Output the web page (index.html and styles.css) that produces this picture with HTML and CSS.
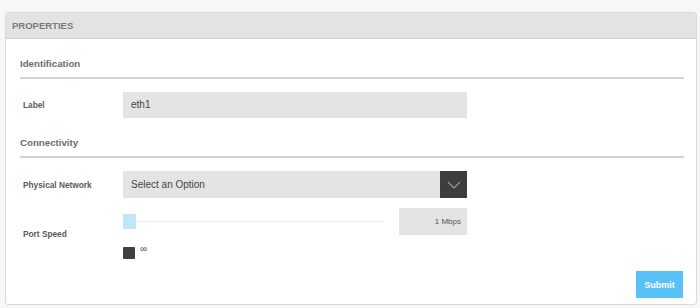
FILE: index.html
```html
<!DOCTYPE html>
<html lang="en">
<head>
  <meta charset="UTF-8">
  <title>Properties</title>
  <link rel="stylesheet" href="styles.css">
</head>
<body>

  <div class="panel">
    <div class="panel-header">PROPERTIES</div>
    <div class="panel-body">

      <h3 class="section-title">Identification</h3>
      <div class="form-row">
        <label class="field-label">Label</label>
        <div class="field">
          <div class="text-input">eth1</div>
        </div>
      </div>

      <h3 class="section-title">Connectivity</h3>
      <div class="form-row">
        <label class="field-label">Physical Network</label>
        <div class="field">
          <div class="select">
            <span class="select-text">Select an Option</span>
            <span class="select-arrow">
              <svg width="14" height="8" viewBox="0 0 14 8"><path d="M1 1 L7 7 L13 1" fill="none" stroke="#9a9a9c" stroke-width="1.2"/></svg>
            </span>
          </div>
        </div>
      </div>

      <div class="form-row speed-row">
        <label class="field-label">Port Speed</label>
        <div class="field">
          <div class="slider-line">
            <div class="slider">
              <span class="slider-handle"></span>
              <span class="slider-track"></span>
            </div>
            <div class="speed-value">1 Mbps</div>
          </div>
          <div class="unlimited">
            <span class="check-box"></span>
            <span class="infinity">&infin;</span>
          </div>
        </div>
      </div>

      <div class="actions">
        <button class="submit">Submit</button>
      </div>
    </div>
  </div>

</body>
</html>
```

FILE: styles.css
```css
body {
  font-family: "Liberation Sans", Arial, sans-serif;
  margin: 0;
  padding: 12px 3px 4px 5px;
  background-color: #f7f7f7;
}

.panel {
  background-color: #fff;
  border: 1px solid #dadada;
  border-radius: 3px;
  height: 293px;
  box-sizing: border-box;
  display: flex;
  flex-direction: column;
}

.panel-header {
  height: 25px;
  line-height: 25px;
  padding-left: 6px;
  background-color: #e3e3e3;
  border-bottom: 1px solid #d2d2d2;
  border-radius: 3px 3px 0 0;
  font-size: 9.5px;
  font-weight: bold;
  color: #7a7a7a;
}

.panel-body {
  padding: 0 12px 0 14px;
  flex: 1;
  display: flex;
  flex-direction: column;
}

.section-title {
  margin: 0;
  padding: 19px 0 8px;
  font-size: 9.7px;
  font-weight: bold;
  color: #6b6b6b;
  border-bottom: 2px solid #d4d4d4;
}

.section-title + .form-row {
  margin-top: 13px;
}

.form-row {
  display: flex;
  align-items: center;
}

.field-label {
  width: 100px;
  padding-left: 3px;
  font-size: 8.3px;
  font-weight: bold;
  color: #5a5a5a;
}

.field {
  width: 344px;
}

.text-input {
  height: 26px;
  line-height: 26px;
  padding-left: 8px;
  background-color: #e4e4e4;
  font-size: 10px;
  color: #444;
}

.select {
  display: flex;
  height: 27px;
  background-color: #e4e4e4;
}

.select-text {
  flex: 1;
  line-height: 27px;
  padding-left: 8px;
  font-size: 10px;
  color: #444;
}

.select-arrow {
  width: 27px;
  background-color: #3d3d40;
  display: flex;
  align-items: center;
  justify-content: center;
}

.speed-row {
  margin-top: 10px;
}

.slider-line {
  display: flex;
  align-items: center;
  justify-content: space-between;
}

.slider {
  display: flex;
  align-items: center;
  width: 261px;
}

.slider-handle {
  width: 13px;
  height: 15px;
  background-color: #bfe7fb;
}

.slider-track {
  flex: 1;
  height: 1px;
  background-color: #ececec;
}

.speed-value {
  width: 68px;
  height: 27px;
  line-height: 27px;
  box-sizing: border-box;
  padding-right: 6px;
  text-align: right;
  background-color: #e4e4e4;
  font-size: 8px;
  color: #555;
}

.unlimited {
  display: flex;
  align-items: flex-start;
  margin-top: 12px;
}

.check-box {
  width: 12px;
  height: 12px;
  border-radius: 1px;
  background-color: #404042;
}

.infinity {
  margin-left: 5px;
  margin-top: -4px;
  font-size: 10px;
  color: #555;
}

.actions {
  margin-top: auto;
  padding-bottom: 6px;
  display: flex;
  justify-content: flex-end;
  padding-right: 1px;
}

.submit {
  width: 47px;
  height: 27px;
  border: none;
  background-color: #58c1f7;
  color: #fff;
  font-family: "Liberation Sans", Arial, sans-serif;
  font-size: 9px;
  font-weight: bold;
  padding: 0;
}
```
